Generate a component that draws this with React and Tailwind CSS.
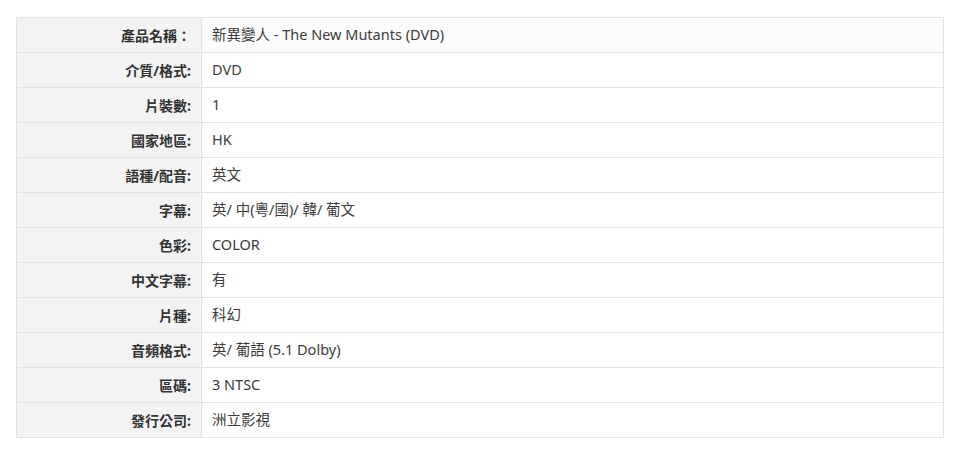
import React from "react";

const rows = [
  ["產品名稱：", "新異變人 - The New Mutants (DVD)"],
  ["介質/格式:", "DVD"],
  ["片裝數:", "1"],
  ["國家地區:", "HK"],
  ["語種/配音:", "英文"],
  ["字幕:", "英/ 中(粵/國)/ 韓/ 葡文"],
  ["色彩:", "COLOR"],
  ["中文字幕:", "有"],
  ["片種:", "科幻"],
  ["音頻格式:", "英/ 葡語 (5.1 Dolby)"],
  ["區碼:", "3 NTSC"],
  ["發行公司:", "洲立影視"],
];

const App = () => {
  return (
    <div
      className="w-[964px] h-[453px] bg-white pt-[17px] pl-[16px]"
      style={{ fontFamily: '"Noto Sans", "Noto Sans CJK TC", sans-serif' }}
    >
      <table className="w-[928px] border-collapse border border-[#e3e3e3] text-[14px]">
        <tbody>
          {rows.map(([label, value], i) => (
            <tr key={label} className="h-[35px]">
              <td className="w-[185px] bg-[#f3f3f3] border border-[#e3e3e3] text-right pr-[10px] font-bold text-[#333] align-middle">
                {label}
              </td>
              <td
                className={`border border-[#e3e3e3] pl-[10px] text-[14.5px] text-[#3c3c3c] align-middle ${
                  i === 0 ? "bg-[#fcfcfc]" : "bg-white"
                }`}
              >
                {value}
              </td>
            </tr>
          ))}
        </tbody>
      </table>
    </div>
  );
};

export default App;
